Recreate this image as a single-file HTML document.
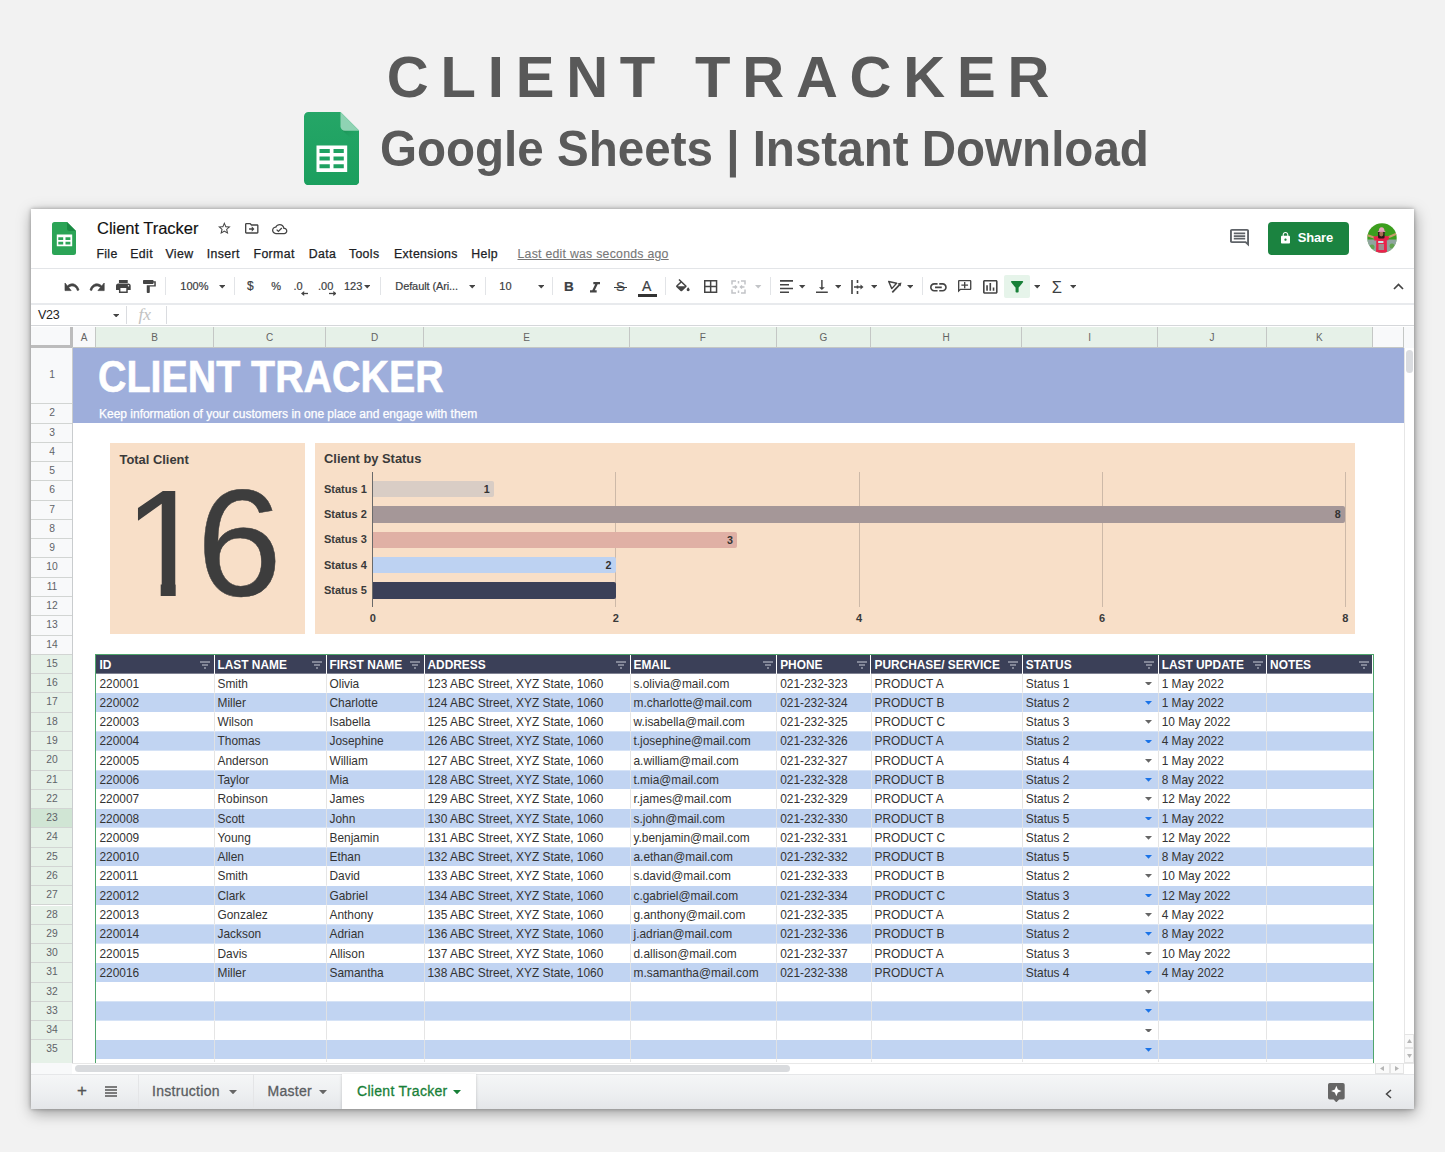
<!DOCTYPE html>
<html lang="en"><head><meta charset="utf-8"><title>Client Tracker</title>
<style>
*{box-sizing:border-box;margin:0;padding:0}
html,body{width:1445px;height:1152px;overflow:hidden}
body{background:#f2f2f2;font-family:"Liberation Sans",Arial,sans-serif;position:relative;color:#333}
.abs{position:absolute}
.t1{left:-1.5px;top:44px;width:1445px;text-align:center;font-weight:bold;font-size:58px;line-height:66px;letter-spacing:11.8px;color:#595959;padding-left:6px;white-space:nowrap}
.t2{left:379.5px;top:119.5px;font-weight:bold;font-size:50px;line-height:58px;color:#5a5a5a;white-space:nowrap;transform-origin:0 0;transform:scaleX(.951)}
.win{left:31px;top:209px;width:1383px;height:899.6px;background:#fff;box-shadow:1px 4px 14px rgba(0,0,0,.36),0 0 4px rgba(0,0,0,.3);overflow:hidden}
.win *{position:absolute}
.hl{left:0;width:1383px;height:1px;background:#e3e5e8}
.doct{left:66px;top:8px;font-size:16.5px;line-height:22px;color:#111;white-space:nowrap;letter-spacing:-.03px;-webkit-text-stroke:.15px #111}
.menu{top:36.8px;font-size:12.3px;line-height:16px;color:#202124;-webkit-text-stroke:.25px #202124;letter-spacing:.37px;white-space:nowrap}
.tb{font-size:11px;color:#3c4043;-webkit-text-stroke:.2px #3c4043;white-space:nowrap;line-height:14px}
.sep{top:67px;width:1px;height:18px;background:#e2e4e7}
.ch{top:117.5px;height:21.3px;background:#e6f1e8;border-right:1px solid #c4c7c5;font-size:10px;line-height:21px;text-align:center;color:#636363}
.rh{left:0;width:42px;background:#f8f9fa;border-bottom:1px solid #d2d5d3;font-size:10.3px;text-align:center;color:#5f6368}
.rh.g{background:#e6f1e8}
.rh.a{background:#d0e5d4}
.cell{font-size:11.9px;line-height:21.7px;color:#333;white-space:nowrap;overflow:hidden;padding-left:3px;height:19.28px}
.hc{font-weight:bold;font-size:11.9px;color:#fff;line-height:21px;white-space:nowrap;overflow:hidden;padding-left:3px;height:18.7px;background:#3b4058;border-right:1px solid #fff}
.row{left:65px;width:1277px;height:19.28px}
.vl{width:1px;background:#e2e2e2}
.tab{top:865px;height:34px;font-size:14px;line-height:34px;color:#5a5d61;white-space:nowrap;letter-spacing:.3px;-webkit-text-stroke:.3px}
</style></head><body>

<div class="abs t1">CLIENT TRACKER</div>
<svg class="abs" style="left:303.5px;top:111.600px" width="55.300" height="73.300" viewBox="0 0 55.300 73.300">
<defs><linearGradient id="gbody" x1="0" y1="0" x2="0" y2="1"><stop offset="0" stop-color="#25a667"/><stop offset="1" stop-color="#1b9f5e"/></linearGradient>
<linearGradient id="gfold" x1="0" y1="0" x2="1" y2="1"><stop offset="0" stop-color="#167a45" stop-opacity=".55"/><stop offset=".6" stop-color="#1b9f5e" stop-opacity="0"/></linearGradient></defs>
<path d="M4.500 0H36.500l18.800 18.800V68.800a4.500 4.500 0 0 1-4.500 4.500H4.500A4.500 4.500 0 0 1 0 68.800V4.500A4.500 4.500 0 0 1 4.500 0z" fill="url(#gbody)"/>
<path d="M37.500 17.500l17.800 1.300v16z" fill="url(#gfold)"/>
<path d="M36.500 0l18.800 18.800H41a4.500 4.500 0 0 1-4.500-4.500z" fill="#8fd3b3"/>
<path d="M12.500 33.500h30.700V60H12.500zM15.500 36.900v4.100h10.300v-4.100zM29.500 36.900v4.100h10.300v-4.100zM15.500 44.400v4h10.300v-4zM29.500 44.400v4h10.300v-4zM15.500 52.200v4.100h10.300v-4.100zM29.500 52.200v4.100h10.300v-4.100z" fill="#fff" fill-rule="evenodd"/>
</svg>
<div class="abs t2">Google Sheets | Instant Download</div>
<div class="abs win">
<svg style="left:21px;top:13px" width="24" height="33" viewBox="0 0 24 33">
<path d="M2.5 0H15l9 9v21.5a2.5 2.5 0 0 1-2.500 2.5h-19A2.500 2.500 0 0 1 0 30.500v-28A2.500 2.500 0 0 1 2.500 0z" fill="#2ba456"/>
<path d="M15 0l9 9h-6.500A2.500 2.500 0 0 1 15 6.500z" fill="#1a8a43"/>
<path d="M4.800 12.600h15.400v11.700H4.800zM6.300 15.300v2.700h4.900v-2.700zM13.500 15.300v2.700h4.900v-2.700zM6.300 19.800v2.700h4.900v-2.700zM13.500 19.800v2.700h4.900v-2.700z" fill="#fff" fill-rule="evenodd"/>
</svg>
<div class="doct">Client Tracker</div>
<svg style="left:187.30px;top:13.40px" width="12.70" height="12.00" viewBox="2.00 2.00 20.00 19.00" preserveAspectRatio="none" overflow="visible"><path d="M22 9.240l-7.190-.620L12 2 9.190 8.630 2 9.240l5.460 4.730L5.820 21 12 17.270 18.180 21l-1.630-7.030L22 9.240zM12 15.400l-3.760 2.270 1-4.280-3.320-2.880 4.380-.380L12 6.100l1.710 4.040 4.380.380-3.320 2.880 1 4.280L12 15.400z" fill="#444" stroke="#444" stroke-width="0"/></svg>
<svg style="left:214.00px;top:14.00px" width="13.50" height="10.70" viewBox="2.00 4.00 20.00 16.00" preserveAspectRatio="none" overflow="visible"><path d="M20 6h-8l-2-2H4c-1.100 0-2 .900-2 2v12c0 1.100.900 2 2 2h16c1.100 0 2-.900 2-2V8c0-1.100-.900-2-2-2zm0 12H4V6h5.170l2 2H20v10zm-8-1l4-4-4-4v3H8v2h4z" fill="#444" stroke="#444" stroke-width="0"/></svg>
<svg style="left:241.30px;top:15.00px" width="15.40" height="10.20" viewBox="0.00 4.00 24.00 16.00" preserveAspectRatio="none" overflow="visible"><path d="M19.350 10.040C18.670 6.590 15.640 4 12 4 9.110 4 6.600 5.640 5.350 8.040 2.340 8.360 0 10.910 0 14c0 3.310 2.690 6 6 6h13c2.760 0 5-2.240 5-5 0-2.640-2.050-4.780-4.650-4.960zM19 18H6c-2.210 0-4-1.790-4-4 0-2.050 1.530-3.760 3.560-3.970l1.070-.110.500-.950C8.080 7.140 9.940 6 12 6c2.620 0 4.880 1.860 5.390 4.430l.300 1.500 1.530.110c1.560.100 2.780 1.410 2.780 2.960 0 1.650-1.350 3-3 3zm-9-3.820l-2.090-2.090L6.500 13.500 10 17l6.010-6.010-1.410-1.410z" fill="#444" stroke="#444" stroke-width="0"/></svg>
<div class="menu" style="left:65.4px">File</div>
<div class="menu" style="left:99.3px">Edit</div>
<div class="menu" style="left:134.5px">View</div>
<div class="menu" style="left:175.7px">Insert</div>
<div class="menu" style="left:222.5px">Format</div>
<div class="menu" style="left:277.7px">Data</div>
<div class="menu" style="left:317.9px">Tools</div>
<div class="menu" style="left:363.0px">Extensions</div>
<div class="menu" style="left:440.2px">Help</div>
<div class="menu" style="left:486.5px;color:#777;-webkit-text-stroke:.1px #777;text-decoration:underline;letter-spacing:.25px">Last edit was seconds ago</div>
<svg style="left:1199.00px;top:20.00px" width="19.00" height="17.50" viewBox="2.00 2.00 20.00 20.00" preserveAspectRatio="none" overflow="visible"><path d="M21.990 4c0-1.100-.890-2-1.990-2H4c-1.100 0-2 .900-2 2v12c0 1.100.900 2 2 2h14l4 4-.010-18zM20 4v13.170L18.830 16H4V4h16zM6 12h12v2H6zm0-3h12v2H6zm0-3h12v2H6z" fill="#5f6368" stroke="#5f6368" stroke-width="0"/></svg>
<div style="left:1236.5px;top:13px;width:81px;height:32.500px;background:#1b8340;border-radius:4px"></div>
<svg style="left:1249.50px;top:23.00px" width="9.00" height="11.50" viewBox="4.00 1.00 16.00 21.00" preserveAspectRatio="none" overflow="visible"><path d="M18 8h-1V6c0-2.760-2.240-5-5-5S7 3.240 7 6v2H6c-1.100 0-2 .900-2 2v10c0 1.100.900 2 2 2h12c1.100 0 2-.900 2-2V10c0-1.100-.900-2-2-2zm-6 9c-1.100 0-2-.900-2-2s.900-2 2-2 2 .900 2 2-.900 2-2 2zm3.100-9H8.900V6c0-1.710 1.390-3.100 3.100-3.100 1.710 0 3.100 1.390 3.100 3.100v2z" fill="#fff" stroke="#fff" stroke-width="0"/></svg>
<div style="left:1266.8px;top:20px;font-size:13px;line-height:18px;font-weight:bold;color:#fff;letter-spacing:-.2px">Share</div>
<svg style="left:1335.8px;top:14.3px" width="30" height="30" viewBox="0 0 30 30"><defs><clipPath id="av"><circle cx="15" cy="15" r="14.700"/></clipPath></defs><g clip-path="url(#av)"><rect width="30" height="30" fill="#3c9e1e"/><rect y="16.500" width="30" height="14" fill="#b3a8d6" opacity=".7"/><circle cx="5" cy="24" r="2.500" fill="#4ea32e" opacity=".7"/><circle cx="25" cy="23" r="2.500" fill="#4ea32e" opacity=".7"/><path d="M7 14.500L.500 12.300" stroke="#c99a6b" stroke-width="2.200" stroke-linecap="round"/><path d="M22 14L29.500 10.800" stroke="#c99a6b" stroke-width="2.200" stroke-linecap="round"/><path d="M6.300 13.600L11.500 13h7l4 .600-1.500 4-1.200-.500.200 13H9l.300-13-1.500.800z" fill="#e9234b"/><rect x="11" y="8" width="6.600" height="7.600" rx="1.500" fill="#2a1a18"/><ellipse cx="14.300" cy="10.800" rx="2.100" ry="2.600" fill="#a8704f"/><path d="M11.900 8.200c0-3 .800-4 2.700-4s2.800 1 2.800 4z" fill="#e8a6bd"/><ellipse cx="14.600" cy="8.300" rx="3.900" ry=".900" fill="#d98fab"/><rect x="11" y="18" width="5.600" height="2" rx=".800" fill="#c6e8ea"/><rect x="11.500" y="21" width="5.500" height="6" fill="#8fa6a0" opacity=".8"/></g></svg>
<div class="hl" style="top:59px"></div>
<svg style="left:33.50px;top:74.10px" width="14.00" height="7.60" viewBox="2.00 7.00 20.47 9.00" preserveAspectRatio="none" overflow="visible"><path d="M12.5 8c-2.650 0-5.050.990-6.900 2.600L2 7v9h9l-3.620-3.620c1.390-1.160 3.160-1.880 5.120-1.880 3.540 0 6.550 2.310 7.600 5.500l2.370-.780C21.080 11.030 17.150 8 12.500 8z" fill="#444" stroke="#444" stroke-width="0.9"/></svg>
<svg style="left:59.10px;top:74.10px" width="14.20" height="7.60" viewBox="1.54 7.00 20.46 9.00" preserveAspectRatio="none" overflow="visible"><path d="M18.400 10.600C16.550 8.990 14.150 8 11.500 8c-4.650 0-8.580 3.030-9.960 7.220L3.900 16c1.050-3.190 4.050-5.500 7.600-5.500 1.950 0 3.730.720 5.120 1.880L13 16h9V7l-3.600 3.600z" fill="#444" stroke="#444" stroke-width="0.9"/></svg>
<svg style="left:84.70px;top:71.30px" width="14.70" height="13.00" viewBox="2.00 3.00 20.00 18.00" preserveAspectRatio="none" overflow="visible"><path d="M19 8H5c-1.660 0-3 1.340-3 3v6h4v4h12v-4h4v-6c0-1.660-1.340-3-3-3zm-3 11H8v-5h8v5zm3-7c-.550 0-1-.450-1-1s.450-1 1-1 1 .450 1 1-.450 1-1 1zm-1-9H6v4h12V3z" fill="#444" stroke="#444" stroke-width="0"/></svg>
<svg style="left:111.60px;top:71.30px" width="12.80" height="13.00" viewBox="4.00 2.00 17.00 20.00" preserveAspectRatio="none" overflow="visible"><path d="M18 4V3c0-.550-.450-1-1-1H5c-.550 0-1 .450-1 1v4c0 .550.450 1 1 1h12c.550 0 1-.450 1-1V6h1v4H9v11c0 .550.450 1 1 1h2c.550 0 1-.450 1-1v-9h8V4h-3z" fill="#444" stroke="#444" stroke-width="0"/></svg>
<div class="sep" style="left:134.2px;top:68px"></div>
<div class="sep" style="left:202.6px;top:68px"></div>
<div class="sep" style="left:348.8px;top:68px"></div>
<div class="sep" style="left:453.5px;top:68px"></div>
<div class="sep" style="left:520.9px;top:68px"></div>
<div class="sep" style="left:634.3px;top:68px"></div>
<div class="sep" style="left:739.2px;top:68px"></div>
<div class="sep" style="left:890.9px;top:68px"></div>
<div class="tb" style="left:149.3px;top:69.8px;">100%</div>
<svg style="left:187.7px;top:76.2px" width="6.4" height="3.39" viewBox="0 0 10 5" preserveAspectRatio="none"><path d="M0 0h10L5 5z" fill="#444"/></svg>
<div class="tb" style="left:216.0px;top:69.8px;font-size:12px">$</div>
<div class="tb" style="left:240.3px;top:69.8px;font-size:11px">%</div>
<div class="tb" style="left:262.5px;top:69.8px;">.0</div>
<div class="tb" style="left:287.0px;top:69.8px;">.00</div>
<svg style="left:269.8px;top:82.3px" width="7.500" height="5" viewBox="0 0 7.500 5"><path d="M7.500 2.500H1.500" fill="none" stroke="#444" stroke-width="1.300"/><path d="M3.200 0L0 2.500 3.200 5z" fill="#444"/></svg>
<svg style="left:297.5px;top:82.3px" width="7.500" height="5" viewBox="0 0 7.500 5"><path d="M0 2.500h6" fill="none" stroke="#444" stroke-width="1.300"/><path d="M4.300 0l3.200 2.500L4.300 5z" fill="#444"/></svg>
<div class="tb" style="left:313.0px;top:69.8px;">123</div>
<svg style="left:333.0px;top:76.2px" width="6.4" height="3.39" viewBox="0 0 10 5" preserveAspectRatio="none"><path d="M0 0h10L5 5z" fill="#444"/></svg>
<div class="tb" style="left:364.3px;top:69.8px;letter-spacing:-.1px">Default (Ari...</div>
<svg style="left:437.5px;top:76.2px" width="6.4" height="3.39" viewBox="0 0 10 5" preserveAspectRatio="none"><path d="M0 0h10L5 5z" fill="#444"/></svg>
<div class="tb" style="left:468.3px;top:69.8px;">10</div>
<svg style="left:506.5px;top:76.2px" width="6.4" height="3.39" viewBox="0 0 10 5" preserveAspectRatio="none"><path d="M0 0h10L5 5z" fill="#444"/></svg>
<div class="tb" style="left:533px;top:70px;font-weight:bold;font-size:13.5px;line-height:16px">B</div>
<svg style="left:558.80px;top:72.60px" width="10.00" height="10.50" viewBox="6.00 4.00 12.00 14.00" preserveAspectRatio="none" overflow="visible"><path d="M10 4v3h2.210l-3.420 8H6v3h8v-3h-2.210l3.420-8H18V4z" fill="#444" stroke="#444" stroke-width="0"/></svg>
<div class="tb" style="left:585px;top:70px;font-size:13.500px;line-height:16px">S</div>
<div style="left:583.2px;top:77.5px;width:12.700px;height:1.300px;background:#3c4043"></div>
<div class="tb" style="left:611px;top:68.5px;font-size:14px;line-height:16px">A</div>
<div style="left:607px;top:85.2px;width:18.800px;height:3px;background:#333"></div>
<svg style="left:644.80px;top:69.90px" width="13.70" height="12.30" viewBox="3.00 0.00 18.00 17.00" preserveAspectRatio="none" overflow="visible"><path d="M16.560 8.940L7.620 0 6.210 1.410l2.380 2.380-5.150 5.150c-.590.590-.590 1.540 0 2.120l5.500 5.500c.290.290.680.440 1.060.440s.770-.150 1.060-.440l5.500-5.500c.590-.580.590-1.530 0-2.120zM5.210 10L10 5.210 14.790 10H5.210zM19 11.500s-2 2.170-2 3.500c0 1.100.900 2 2 2s2-.900 2-2c0-1.330-2-3.500-2-3.500z" fill="#444" stroke="#444" stroke-width="0"/></svg>
<svg style="left:672.60px;top:70.90px" width="13.30" height="13.00" viewBox="3.00 3.00 18.00 18.00" preserveAspectRatio="none" overflow="visible"><path d="M3 3v18h18V3H3zm8 16H5v-6h6v6zm0-8H5V5h6v6zm8 8h-6v-6h6v6zm0-8h-6V5h6v6z" fill="#444" stroke="#444" stroke-width="0"/></svg>
<svg style="left:699.5px;top:71px" width="15" height="14" viewBox="0 0 15 14"><path d="M1 4.500V1h4M10 1h4v3.500M14 9.500V13h-4M5 13H1V9.500M7.500 1v2.500M7.500 10.500V13M1.500 7H5M13.500 7H10M4 5.500L5.500 7 4 8.500M11 5.500L9.500 7 11 8.500" fill="none" stroke="#c2c4c7" stroke-width="1.500"/></svg>
<svg style="left:724.3px;top:76.2px" width="6.4" height="3.39" viewBox="0 0 10 5" preserveAspectRatio="none"><path d="M0 0h10L5 5z" fill="#c2c4c7"/></svg>
<svg style="left:749.4px;top:71px" width="13" height="13.200" viewBox="0 0 13 13.200"><path d="M0 .900h13M0 4.700h9M0 8.500h13M0 12.300h9" stroke="#444" stroke-width="1.600"/></svg>
<svg style="left:768.2px;top:76.2px" width="6.4" height="3.39" viewBox="0 0 10 5" preserveAspectRatio="none"><path d="M0 0h10L5 5z" fill="#444"/></svg>
<svg style="left:785.20px;top:70.90px" width="11.80" height="13.00" viewBox="4.00 3.00 16.00 18.00" preserveAspectRatio="none" overflow="visible"><path d="M16 13h-3V3h-2v10H8l4 4 4-4zM4 19v2h16v-2H4z" fill="#444" stroke="#444" stroke-width="0"/></svg>
<svg style="left:804.0px;top:76.2px" width="6.4" height="3.39" viewBox="0 0 10 5" preserveAspectRatio="none"><path d="M0 0h10L5 5z" fill="#444"/></svg>
<svg style="left:820px;top:71px" width="13" height="14" viewBox="0 0 13 14"><path d="M1 0v14M6.500 0v3M6.500 5.500v3M6.500 11v3" stroke="#444" stroke-width="1.600"/><path d="M3 7h7" stroke="#444" stroke-width="1.500"/><path d="M9.500 4.500L12.500 7 9.500 9.500z" fill="#444"/></svg>
<svg style="left:840.0px;top:76.2px" width="6.4" height="3.39" viewBox="0 0 10 5" preserveAspectRatio="none"><path d="M0 0h10L5 5z" fill="#444"/></svg>
<svg style="left:856.5px;top:71px" width="15" height="14" viewBox="0 0 15 14"><path d="M.700 1.500l7.900 1.700L3.800 8.600z" fill="none" stroke="#444" stroke-width="1.400" stroke-linejoin="round"/><path d="M4.300 12.300l7.400-7.600" stroke="#444" stroke-width="1.700"/><path d="M13.500 2.600l-4 .900 3 3z" fill="#444"/></svg>
<svg style="left:875.7px;top:76.2px" width="6.4" height="3.39" viewBox="0 0 10 5" preserveAspectRatio="none"><path d="M0 0h10L5 5z" fill="#444"/></svg>
<svg style="left:899.40px;top:73.80px" width="16.80" height="8.60" viewBox="2.00 7.00 20.00 10.00" preserveAspectRatio="none" overflow="visible"><path d="M3.900 12c0-1.710 1.390-3.100 3.100-3.100h4V7H7c-2.760 0-5 2.240-5 5s2.240 5 5 5h4v-1.900H7c-1.710 0-3.100-1.390-3.100-3.100zM8 13h8v-2H8v2zm9-6h-4v1.900h4c1.710 0 3.100 1.390 3.100 3.100s-1.390 3.100-3.100 3.100h-4V17h4c2.760 0 5-2.240 5-5s-2.240-5-5-5z" fill="#444" stroke="#444" stroke-width="0"/></svg>
<svg style="left:926.80px;top:71.40px" width="13.40" height="12.50" viewBox="2.00 2.00 20.00 20.00" preserveAspectRatio="none" overflow="visible"><path d="M2.010 4c0-1.100.890-2 1.990-2h16c1.100 0 2 .900 2 2v12c0 1.100-.900 2-2 2H6l-4 4 .010-18zM4 4v13.170L5.170 16H20V4H4zm7 1h2v4h4v2h-4v4h-2v-4H7V9h4z" fill="#444" stroke="#444" stroke-width="0"/></svg>
<svg style="left:951.80px;top:70.80px" width="14.60" height="13.70" viewBox="3.00 3.00 18.00 18.00" preserveAspectRatio="none" overflow="visible"><path d="M19 3H5c-1.100 0-2 .900-2 2v14c0 1.100.900 2 2 2h14c1.100 0 2-.900 2-2V5c0-1.100-.900-2-2-2zm0 16H5V5h14v14zM7 10h2v7H7zm4-3h2v10h-2zm4 6h2v4h-2z" fill="#444" stroke="#444" stroke-width="0"/></svg>
<div style="left:973px;top:65.5px;width:25.500px;height:23.500px;background:#e6f4ea;border-radius:2px"></div>
<svg style="left:979.80px;top:72.30px" width="12.20" height="11.60" viewBox="4.04 4.00 15.91 16.00" preserveAspectRatio="none" overflow="visible"><path d="M4.250 5.610C6.270 8.200 10 13 10 13v6c0 .550.450 1 1 1h2c.550 0 1-.450 1-1v-6s3.720-4.800 5.740-7.390c.510-.660.040-1.610-.790-1.610H5.040c-.830 0-1.300.950-.790 1.610z" fill="#188038" stroke="#188038" stroke-width="0"/></svg>
<svg style="left:1003.0px;top:76.2px" width="6.4" height="3.39" viewBox="0 0 10 5" preserveAspectRatio="none"><path d="M0 0h10L5 5z" fill="#444"/></svg>
<div class="tb" style="left:1020.8px;top:69.8px;font-size:16.500px;line-height:16px;top:69.6px;-webkit-text-stroke:0">Σ</div>
<svg style="left:1038.6px;top:76.2px" width="6.4" height="3.39" viewBox="0 0 10 5" preserveAspectRatio="none"><path d="M0 0h10L5 5z" fill="#444"/></svg>
<svg style="left:1361.5px;top:74px" width="11" height="7" viewBox="0 0 11 7"><path d="M1 6l4.500-4.500L10 6" fill="none" stroke="#444" stroke-width="1.700"/></svg>
<div class="hl" style="top:94px;height:2px;background:#e8eaed"></div>
<div style="left:7px;top:98.5px;font-size:12.500px;line-height:15px;color:#222;letter-spacing:-.3px">V23</div>
<svg style="left:82.0px;top:104.9px" width="6.4" height="3.39" viewBox="0 0 10 5" preserveAspectRatio="none"><path d="M0 0h10L5 5z" fill="#444"/></svg>
<div style="left:95.3px;top:97px;width:1px;height:18px;background:#dadce0"></div>
<div style="left:107.5px;top:95.5px;font-size:17.5px;line-height:18px;font-style:italic;font-family:'Liberation Serif',serif;color:#c2c2c2">fx</div>
<div style="left:135.2px;top:97px;width:1px;height:18px;background:#dadce0"></div>
<div class="hl" style="top:116px;background:#d5d7da"></div>
<div style="left:0;top:117.5px;width:42px;height:21.300px;background:#f8f9fa;border-right:3.800px solid #bcbcbc;border-bottom:3.600px solid #bcbcbc"></div>
<div class="ch" style="left:42.0px;width:23.0px;background:#f8f9fa">A</div>
<div class="ch" style="left:65.0px;width:118.0px;background:#e6f1e8">B</div>
<div class="ch" style="left:183.0px;width:112.0px;background:#e6f1e8">C</div>
<div class="ch" style="left:295.0px;width:98.0px;background:#e6f1e8">D</div>
<div class="ch" style="left:393.0px;width:206.0px;background:#e6f1e8">E</div>
<div class="ch" style="left:599.0px;width:146.7px;background:#e6f1e8">F</div>
<div class="ch" style="left:745.7px;width:94.3px;background:#e6f1e8">G</div>
<div class="ch" style="left:840.0px;width:151.3px;background:#e6f1e8">H</div>
<div class="ch" style="left:991.3px;width:135.9px;background:#e6f1e8">I</div>
<div class="ch" style="left:1127.2px;width:108.4px;background:#e6f1e8">J</div>
<div class="ch" style="left:1235.6px;width:106.4px;background:#e6f1e8">K</div>
<div class="ch" style="left:1342.0px;width:31.0px;background:#f8f9fa"></div>
<div style="left:1373px;top:117.5px;width:10px;height:21.300px;background:#f8f9fa"></div>
<div style="left:42px;top:138px;width:1330px;height:1px;background:#c4c7c5"></div>
<div class="rh" style="top:138.80px;height:56.20px;line-height:54.90px">1</div>
<div class="rh" style="top:195.00px;height:19.50px;line-height:18.20px">2</div>
<div class="rh" style="top:214.50px;height:19.28px;line-height:17.98px">3</div>
<div class="rh" style="top:233.78px;height:19.28px;line-height:17.98px">4</div>
<div class="rh" style="top:253.06px;height:19.28px;line-height:17.98px">5</div>
<div class="rh" style="top:272.34px;height:19.28px;line-height:17.98px">6</div>
<div class="rh" style="top:291.62px;height:19.28px;line-height:17.98px">7</div>
<div class="rh" style="top:310.90px;height:19.28px;line-height:17.98px">8</div>
<div class="rh" style="top:330.18px;height:19.28px;line-height:17.98px">9</div>
<div class="rh" style="top:349.46px;height:19.28px;line-height:17.98px">10</div>
<div class="rh" style="top:368.74px;height:19.28px;line-height:17.98px">11</div>
<div class="rh" style="top:388.02px;height:19.28px;line-height:17.98px">12</div>
<div class="rh" style="top:407.30px;height:19.28px;line-height:17.98px">13</div>
<div class="rh" style="top:426.58px;height:19.28px;line-height:17.98px">14</div>
<div class="rh g" style="top:445.86px;height:19.28px;line-height:17.98px">15</div>
<div class="rh g" style="top:465.14px;height:19.28px;line-height:17.98px">16</div>
<div class="rh g" style="top:484.42px;height:19.28px;line-height:17.98px">17</div>
<div class="rh g" style="top:503.70px;height:19.28px;line-height:17.98px">18</div>
<div class="rh g" style="top:522.98px;height:19.28px;line-height:17.98px">19</div>
<div class="rh g" style="top:542.26px;height:19.28px;line-height:17.98px">20</div>
<div class="rh g" style="top:561.54px;height:19.28px;line-height:17.98px">21</div>
<div class="rh g" style="top:580.82px;height:19.28px;line-height:17.98px">22</div>
<div class="rh g a" style="top:600.10px;height:19.28px;line-height:17.98px">23</div>
<div class="rh g" style="top:619.38px;height:19.28px;line-height:17.98px">24</div>
<div class="rh g" style="top:638.66px;height:19.28px;line-height:17.98px">25</div>
<div class="rh g" style="top:657.94px;height:19.28px;line-height:17.98px">26</div>
<div class="rh g" style="top:677.22px;height:19.28px;line-height:17.98px">27</div>
<div class="rh g" style="top:696.50px;height:19.28px;line-height:17.98px">28</div>
<div class="rh g" style="top:715.78px;height:19.28px;line-height:17.98px">29</div>
<div class="rh g" style="top:735.06px;height:19.28px;line-height:17.98px">30</div>
<div class="rh g" style="top:754.34px;height:19.28px;line-height:17.98px">31</div>
<div class="rh g" style="top:773.62px;height:19.28px;line-height:17.98px">32</div>
<div class="rh g" style="top:792.90px;height:19.28px;line-height:17.98px">33</div>
<div class="rh g" style="top:812.18px;height:19.28px;line-height:17.98px">34</div>
<div class="rh g" style="top:831.46px;height:19.28px;line-height:17.98px">35</div>
<div class="rh g" style="top:850.24px;height:4px;border:0"></div>
<div style="left:41px;top:138px;width:1px;height:716px;background:#c9ccce"></div>
<div style="left:42px;top:138.8px;width:1331px;height:75.400px;background:#9eaedb"></div>
<div style="left:67px;top:141.5px;font-size:45px;line-height:52px;font-weight:bold;color:#fff;white-space:nowrap;transform-origin:0 0;transform:scaleX(.875);-webkit-text-stroke:.6px #fff">CLIENT TRACKER</div>
<div style="left:68px;top:197.5px;font-size:12px;line-height:15px;color:#fff;white-space:nowrap;letter-spacing:-.01px;-webkit-text-stroke:.25px #fff">Keep information of your customers in one place and engage with them</div>
<div style="left:79px;top:234px;width:195px;height:190.500px;background:#f8dfc8"></div>
<div style="left:284px;top:234px;width:1040px;height:190.500px;background:#f8dfc8"></div>
<div style="left:88.5px;top:243px;font-size:12.900px;line-height:15px;font-weight:bold;color:#3a3a3a">Total Client</div>
<div style="left:92.2px;top:253.8px;font-size:153px;line-height:160px;color:#3d3d3d;clip-path:polygon(0 0,100% 0,100% 121.300px,52.500px 121.300px,52.500px 100%,37.500px 100%,37.500px 121.300px,0 121.300px)">1</div>
<div style="left:165.8px;top:254.3px;font-size:153px;line-height:160px;color:#3d3d3d;-webkit-text-stroke:.5px #3d3d3d">6</div>
<div style="left:293px;top:242.4px;font-size:12.900px;line-height:15px;font-weight:bold;color:#3a3a3a">Client by Status</div>
<div style="left:341.3px;top:262.5px;width:1px;height:135.500px;background:#6a6a6a"></div>
<div style="left:331.8px;top:403px;width:20px;text-align:center;font-size:11px;line-height:13px;font-weight:bold;color:#3a3a3a">0</div>
<div style="left:584.4px;top:262.5px;width:1px;height:135.500px;background:#cdb9a8"></div>
<div style="left:574.9px;top:403px;width:20px;text-align:center;font-size:11px;line-height:13px;font-weight:bold;color:#3a3a3a">2</div>
<div style="left:827.5px;top:262.5px;width:1px;height:135.500px;background:#cdb9a8"></div>
<div style="left:818.0px;top:403px;width:20px;text-align:center;font-size:11px;line-height:13px;font-weight:bold;color:#3a3a3a">4</div>
<div style="left:1070.6px;top:262.5px;width:1px;height:135.500px;background:#cdb9a8"></div>
<div style="left:1061.1px;top:403px;width:20px;text-align:center;font-size:11px;line-height:13px;font-weight:bold;color:#3a3a3a">6</div>
<div style="left:1313.7px;top:262.5px;width:1px;height:135.500px;background:#cdb9a8"></div>
<div style="left:1304.2px;top:403px;width:20px;text-align:center;font-size:11px;line-height:13px;font-weight:bold;color:#3a3a3a">8</div>
<div style="left:293px;top:272.6px;font-size:11px;line-height:14px;font-weight:bold;color:#3a3a3a">Status 1</div>
<div style="left:341.8px;top:271.8px;width:121.5px;height:16.400px;background:#d9cdc5;border-radius:0 2px 2px 0;text-align:right;padding-right:4.500px;font-size:10.700px;line-height:16.400px;font-weight:bold;color:#333;position:absolute">1</div>
<div style="left:293px;top:298.0px;font-size:11px;line-height:14px;font-weight:bold;color:#3a3a3a">Status 2</div>
<div style="left:341.8px;top:297.2px;width:972.4px;height:16.400px;background:#a59798;border-radius:0 2px 2px 0;text-align:right;padding-right:4.500px;font-size:10.700px;line-height:16.400px;font-weight:bold;color:#333;position:absolute">8</div>
<div style="left:293px;top:323.4px;font-size:11px;line-height:14px;font-weight:bold;color:#3a3a3a">Status 3</div>
<div style="left:341.8px;top:322.6px;width:364.6px;height:16.400px;background:#e0b0a5;border-radius:0 2px 2px 0;text-align:right;padding-right:4.500px;font-size:10.700px;line-height:16.400px;font-weight:bold;color:#333;position:absolute">3</div>
<div style="left:293px;top:348.8px;font-size:11px;line-height:14px;font-weight:bold;color:#3a3a3a">Status 4</div>
<div style="left:341.8px;top:348.0px;width:243.1px;height:16.400px;background:#bdd2f2;border-radius:0 2px 2px 0;text-align:right;padding-right:4.500px;font-size:10.700px;line-height:16.400px;font-weight:bold;color:#333;position:absolute">2</div>
<div style="left:293px;top:374.2px;font-size:11px;line-height:14px;font-weight:bold;color:#3a3a3a">Status 5</div>
<div style="left:341.8px;top:373.4px;width:243.1px;height:16.400px;background:#3b4058;border-radius:0 2px 2px 0;text-align:right;padding-right:4.500px;font-size:10.700px;line-height:16.400px;font-weight:bold;color:#3b4058;position:absolute">2</div>
<div style="left:64px;top:445.66px;width:1279px;height:19px;background:#3b4058"></div>
<div class="hc" style="left:65.5px;top:445.96px;width:118.0px">ID</div>
<svg style="left:169.0px;top:451.56px" width="10" height="8" viewBox="0 0 10 8"><path d="M0 1h10M2 4h6M4 7h2" stroke="#c9ccd6" stroke-width="1.200"/></svg>
<div class="hc" style="left:183.5px;top:445.96px;width:112.0px">LAST NAME</div>
<svg style="left:281.0px;top:451.56px" width="10" height="8" viewBox="0 0 10 8"><path d="M0 1h10M2 4h6M4 7h2" stroke="#c9ccd6" stroke-width="1.200"/></svg>
<div class="hc" style="left:295.5px;top:445.96px;width:98.0px">FIRST NAME</div>
<svg style="left:379.0px;top:451.56px" width="10" height="8" viewBox="0 0 10 8"><path d="M0 1h10M2 4h6M4 7h2" stroke="#c9ccd6" stroke-width="1.200"/></svg>
<div class="hc" style="left:393.5px;top:445.96px;width:206.0px">ADDRESS</div>
<svg style="left:585.0px;top:451.56px" width="10" height="8" viewBox="0 0 10 8"><path d="M0 1h10M2 4h6M4 7h2" stroke="#c9ccd6" stroke-width="1.200"/></svg>
<div class="hc" style="left:599.5px;top:445.96px;width:146.7px">EMAIL</div>
<svg style="left:731.7px;top:451.56px" width="10" height="8" viewBox="0 0 10 8"><path d="M0 1h10M2 4h6M4 7h2" stroke="#c9ccd6" stroke-width="1.200"/></svg>
<div class="hc" style="left:746.2px;top:445.96px;width:94.3px">PHONE</div>
<svg style="left:826.0px;top:451.56px" width="10" height="8" viewBox="0 0 10 8"><path d="M0 1h10M2 4h6M4 7h2" stroke="#c9ccd6" stroke-width="1.200"/></svg>
<div class="hc" style="left:840.5px;top:445.96px;width:151.3px">PURCHASE/ SERVICE</div>
<svg style="left:977.3px;top:451.56px" width="10" height="8" viewBox="0 0 10 8"><path d="M0 1h10M2 4h6M4 7h2" stroke="#c9ccd6" stroke-width="1.200"/></svg>
<div class="hc" style="left:991.8px;top:445.96px;width:135.9px">STATUS</div>
<svg style="left:1113.2px;top:451.56px" width="10" height="8" viewBox="0 0 10 8"><path d="M0 1h10M2 4h6M4 7h2" stroke="#c9ccd6" stroke-width="1.200"/></svg>
<div class="hc" style="left:1127.7px;top:445.96px;width:108.4px">LAST UPDATE</div>
<svg style="left:1221.6px;top:451.56px" width="10" height="8" viewBox="0 0 10 8"><path d="M0 1h10M2 4h6M4 7h2" stroke="#c9ccd6" stroke-width="1.200"/></svg>
<div class="hc" style="left:1236.1px;top:445.96px;width:106.4px">NOTES</div>
<svg style="left:1328.0px;top:451.56px" width="10" height="8" viewBox="0 0 10 8"><path d="M0 1h10M2 4h6M4 7h2" stroke="#c9ccd6" stroke-width="1.200"/></svg>
<div style="left:65px;top:464.64px;width:1277px;height:19.28px;background:#fff"></div>
<div class="cell" style="left:65.5px;top:464.64px;width:117.0px">220001</div>
<div class="cell" style="left:183.5px;top:464.64px;width:111.0px">Smith</div>
<div class="cell" style="left:295.5px;top:464.64px;width:97.0px">Olivia</div>
<div class="cell" style="left:393.5px;top:464.64px;width:205.0px">123 ABC Street, XYZ State, 1060</div>
<div class="cell" style="left:599.5px;top:464.64px;width:145.7px">s.olivia@mail.com</div>
<div class="cell" style="left:746.2px;top:464.64px;width:93.3px">021-232-323</div>
<div class="cell" style="left:840.5px;top:464.64px;width:150.3px">PRODUCT A</div>
<div class="cell" style="left:991.8px;top:464.64px;width:134.9px">Status 1</div>
<div class="cell" style="left:1127.7px;top:464.64px;width:107.4px">1 May 2022</div>
<svg style="left:1114.0px;top:472.6px" width="7" height="3.71" viewBox="0 0 10 5" preserveAspectRatio="none"><path d="M0 0h10L5 5z" fill="#666"/></svg>
<div style="left:65px;top:483.92px;width:1277px;height:19.28px;background:#c1d4f2"></div>
<div class="cell" style="left:65.5px;top:483.92px;width:117.0px">220002</div>
<div class="cell" style="left:183.5px;top:483.92px;width:111.0px">Miller</div>
<div class="cell" style="left:295.5px;top:483.92px;width:97.0px">Charlotte</div>
<div class="cell" style="left:393.5px;top:483.92px;width:205.0px">124 ABC Street, XYZ State, 1060</div>
<div class="cell" style="left:599.5px;top:483.92px;width:145.7px">m.charlotte@mail.com</div>
<div class="cell" style="left:746.2px;top:483.92px;width:93.3px">021-232-324</div>
<div class="cell" style="left:840.5px;top:483.92px;width:150.3px">PRODUCT B</div>
<div class="cell" style="left:991.8px;top:483.92px;width:134.9px">Status 2</div>
<div class="cell" style="left:1127.7px;top:483.92px;width:107.4px">1 May 2022</div>
<svg style="left:1114.0px;top:491.9px" width="7" height="3.71" viewBox="0 0 10 5" preserveAspectRatio="none"><path d="M0 0h10L5 5z" fill="#1a73e8"/></svg>
<div style="left:65px;top:503.20px;width:1277px;height:19.28px;background:#fff"></div>
<div class="cell" style="left:65.5px;top:503.20px;width:117.0px">220003</div>
<div class="cell" style="left:183.5px;top:503.20px;width:111.0px">Wilson</div>
<div class="cell" style="left:295.5px;top:503.20px;width:97.0px">Isabella</div>
<div class="cell" style="left:393.5px;top:503.20px;width:205.0px">125 ABC Street, XYZ State, 1060</div>
<div class="cell" style="left:599.5px;top:503.20px;width:145.7px">w.isabella@mail.com</div>
<div class="cell" style="left:746.2px;top:503.20px;width:93.3px">021-232-325</div>
<div class="cell" style="left:840.5px;top:503.20px;width:150.3px">PRODUCT C</div>
<div class="cell" style="left:991.8px;top:503.20px;width:134.9px">Status 3</div>
<div class="cell" style="left:1127.7px;top:503.20px;width:107.4px">10 May 2022</div>
<svg style="left:1114.0px;top:511.2px" width="7" height="3.71" viewBox="0 0 10 5" preserveAspectRatio="none"><path d="M0 0h10L5 5z" fill="#666"/></svg>
<div style="left:65px;top:522.48px;width:1277px;height:19.28px;background:#c1d4f2"></div>
<div class="cell" style="left:65.5px;top:522.48px;width:117.0px">220004</div>
<div class="cell" style="left:183.5px;top:522.48px;width:111.0px">Thomas</div>
<div class="cell" style="left:295.5px;top:522.48px;width:97.0px">Josephine</div>
<div class="cell" style="left:393.5px;top:522.48px;width:205.0px">126 ABC Street, XYZ State, 1060</div>
<div class="cell" style="left:599.5px;top:522.48px;width:145.7px">t.josephine@mail.com</div>
<div class="cell" style="left:746.2px;top:522.48px;width:93.3px">021-232-326</div>
<div class="cell" style="left:840.5px;top:522.48px;width:150.3px">PRODUCT A</div>
<div class="cell" style="left:991.8px;top:522.48px;width:134.9px">Status 2</div>
<div class="cell" style="left:1127.7px;top:522.48px;width:107.4px">4 May 2022</div>
<svg style="left:1114.0px;top:530.5px" width="7" height="3.71" viewBox="0 0 10 5" preserveAspectRatio="none"><path d="M0 0h10L5 5z" fill="#1a73e8"/></svg>
<div style="left:65px;top:541.76px;width:1277px;height:19.28px;background:#fff"></div>
<div class="cell" style="left:65.5px;top:541.76px;width:117.0px">220005</div>
<div class="cell" style="left:183.5px;top:541.76px;width:111.0px">Anderson</div>
<div class="cell" style="left:295.5px;top:541.76px;width:97.0px">William</div>
<div class="cell" style="left:393.5px;top:541.76px;width:205.0px">127 ABC Street, XYZ State, 1060</div>
<div class="cell" style="left:599.5px;top:541.76px;width:145.7px">a.william@mail.com</div>
<div class="cell" style="left:746.2px;top:541.76px;width:93.3px">021-232-327</div>
<div class="cell" style="left:840.5px;top:541.76px;width:150.3px">PRODUCT A</div>
<div class="cell" style="left:991.8px;top:541.76px;width:134.9px">Status 4</div>
<div class="cell" style="left:1127.7px;top:541.76px;width:107.4px">1 May 2022</div>
<svg style="left:1114.0px;top:549.8px" width="7" height="3.71" viewBox="0 0 10 5" preserveAspectRatio="none"><path d="M0 0h10L5 5z" fill="#666"/></svg>
<div style="left:65px;top:561.04px;width:1277px;height:19.28px;background:#c1d4f2"></div>
<div class="cell" style="left:65.5px;top:561.04px;width:117.0px">220006</div>
<div class="cell" style="left:183.5px;top:561.04px;width:111.0px">Taylor</div>
<div class="cell" style="left:295.5px;top:561.04px;width:97.0px">Mia</div>
<div class="cell" style="left:393.5px;top:561.04px;width:205.0px">128 ABC Street, XYZ State, 1060</div>
<div class="cell" style="left:599.5px;top:561.04px;width:145.7px">t.mia@mail.com</div>
<div class="cell" style="left:746.2px;top:561.04px;width:93.3px">021-232-328</div>
<div class="cell" style="left:840.5px;top:561.04px;width:150.3px">PRODUCT B</div>
<div class="cell" style="left:991.8px;top:561.04px;width:134.9px">Status 2</div>
<div class="cell" style="left:1127.7px;top:561.04px;width:107.4px">8 May 2022</div>
<svg style="left:1114.0px;top:569.0px" width="7" height="3.71" viewBox="0 0 10 5" preserveAspectRatio="none"><path d="M0 0h10L5 5z" fill="#1a73e8"/></svg>
<div style="left:65px;top:580.32px;width:1277px;height:19.28px;background:#fff"></div>
<div class="cell" style="left:65.5px;top:580.32px;width:117.0px">220007</div>
<div class="cell" style="left:183.5px;top:580.32px;width:111.0px">Robinson</div>
<div class="cell" style="left:295.5px;top:580.32px;width:97.0px">James</div>
<div class="cell" style="left:393.5px;top:580.32px;width:205.0px">129 ABC Street, XYZ State, 1060</div>
<div class="cell" style="left:599.5px;top:580.32px;width:145.7px">r.james@mail.com</div>
<div class="cell" style="left:746.2px;top:580.32px;width:93.3px">021-232-329</div>
<div class="cell" style="left:840.5px;top:580.32px;width:150.3px">PRODUCT A</div>
<div class="cell" style="left:991.8px;top:580.32px;width:134.9px">Status 2</div>
<div class="cell" style="left:1127.7px;top:580.32px;width:107.4px">12 May 2022</div>
<svg style="left:1114.0px;top:588.3px" width="7" height="3.71" viewBox="0 0 10 5" preserveAspectRatio="none"><path d="M0 0h10L5 5z" fill="#666"/></svg>
<div style="left:65px;top:599.60px;width:1277px;height:19.28px;background:#c1d4f2"></div>
<div class="cell" style="left:65.5px;top:599.60px;width:117.0px">220008</div>
<div class="cell" style="left:183.5px;top:599.60px;width:111.0px">Scott</div>
<div class="cell" style="left:295.5px;top:599.60px;width:97.0px">John</div>
<div class="cell" style="left:393.5px;top:599.60px;width:205.0px">130 ABC Street, XYZ State, 1060</div>
<div class="cell" style="left:599.5px;top:599.60px;width:145.7px">s.john@mail.com</div>
<div class="cell" style="left:746.2px;top:599.60px;width:93.3px">021-232-330</div>
<div class="cell" style="left:840.5px;top:599.60px;width:150.3px">PRODUCT B</div>
<div class="cell" style="left:991.8px;top:599.60px;width:134.9px">Status 5</div>
<div class="cell" style="left:1127.7px;top:599.60px;width:107.4px">1 May 2022</div>
<svg style="left:1114.0px;top:607.6px" width="7" height="3.71" viewBox="0 0 10 5" preserveAspectRatio="none"><path d="M0 0h10L5 5z" fill="#1a73e8"/></svg>
<div style="left:65px;top:618.88px;width:1277px;height:19.28px;background:#fff"></div>
<div class="cell" style="left:65.5px;top:618.88px;width:117.0px">220009</div>
<div class="cell" style="left:183.5px;top:618.88px;width:111.0px">Young</div>
<div class="cell" style="left:295.5px;top:618.88px;width:97.0px">Benjamin</div>
<div class="cell" style="left:393.5px;top:618.88px;width:205.0px">131 ABC Street, XYZ State, 1060</div>
<div class="cell" style="left:599.5px;top:618.88px;width:145.7px">y.benjamin@mail.com</div>
<div class="cell" style="left:746.2px;top:618.88px;width:93.3px">021-232-331</div>
<div class="cell" style="left:840.5px;top:618.88px;width:150.3px">PRODUCT C</div>
<div class="cell" style="left:991.8px;top:618.88px;width:134.9px">Status 2</div>
<div class="cell" style="left:1127.7px;top:618.88px;width:107.4px">12 May 2022</div>
<svg style="left:1114.0px;top:626.9px" width="7" height="3.71" viewBox="0 0 10 5" preserveAspectRatio="none"><path d="M0 0h10L5 5z" fill="#666"/></svg>
<div style="left:65px;top:638.16px;width:1277px;height:19.28px;background:#c1d4f2"></div>
<div class="cell" style="left:65.5px;top:638.16px;width:117.0px">220010</div>
<div class="cell" style="left:183.5px;top:638.16px;width:111.0px">Allen</div>
<div class="cell" style="left:295.5px;top:638.16px;width:97.0px">Ethan</div>
<div class="cell" style="left:393.5px;top:638.16px;width:205.0px">132 ABC Street, XYZ State, 1060</div>
<div class="cell" style="left:599.5px;top:638.16px;width:145.7px">a.ethan@mail.com</div>
<div class="cell" style="left:746.2px;top:638.16px;width:93.3px">021-232-332</div>
<div class="cell" style="left:840.5px;top:638.16px;width:150.3px">PRODUCT B</div>
<div class="cell" style="left:991.8px;top:638.16px;width:134.9px">Status 5</div>
<div class="cell" style="left:1127.7px;top:638.16px;width:107.4px">8 May 2022</div>
<svg style="left:1114.0px;top:646.2px" width="7" height="3.71" viewBox="0 0 10 5" preserveAspectRatio="none"><path d="M0 0h10L5 5z" fill="#1a73e8"/></svg>
<div style="left:65px;top:657.44px;width:1277px;height:19.28px;background:#fff"></div>
<div class="cell" style="left:65.5px;top:657.44px;width:117.0px">220011</div>
<div class="cell" style="left:183.5px;top:657.44px;width:111.0px">Smith</div>
<div class="cell" style="left:295.5px;top:657.44px;width:97.0px">David</div>
<div class="cell" style="left:393.5px;top:657.44px;width:205.0px">133 ABC Street, XYZ State, 1060</div>
<div class="cell" style="left:599.5px;top:657.44px;width:145.7px">s.david@mail.com</div>
<div class="cell" style="left:746.2px;top:657.44px;width:93.3px">021-232-333</div>
<div class="cell" style="left:840.5px;top:657.44px;width:150.3px">PRODUCT B</div>
<div class="cell" style="left:991.8px;top:657.44px;width:134.9px">Status 2</div>
<div class="cell" style="left:1127.7px;top:657.44px;width:107.4px">10 May 2022</div>
<svg style="left:1114.0px;top:665.4px" width="7" height="3.71" viewBox="0 0 10 5" preserveAspectRatio="none"><path d="M0 0h10L5 5z" fill="#666"/></svg>
<div style="left:65px;top:676.72px;width:1277px;height:19.28px;background:#c1d4f2"></div>
<div class="cell" style="left:65.5px;top:676.72px;width:117.0px">220012</div>
<div class="cell" style="left:183.5px;top:676.72px;width:111.0px">Clark</div>
<div class="cell" style="left:295.5px;top:676.72px;width:97.0px">Gabriel</div>
<div class="cell" style="left:393.5px;top:676.72px;width:205.0px">134 ABC Street, XYZ State, 1060</div>
<div class="cell" style="left:599.5px;top:676.72px;width:145.7px">c.gabriel@mail.com</div>
<div class="cell" style="left:746.2px;top:676.72px;width:93.3px">021-232-334</div>
<div class="cell" style="left:840.5px;top:676.72px;width:150.3px">PRODUCT C</div>
<div class="cell" style="left:991.8px;top:676.72px;width:134.9px">Status 3</div>
<div class="cell" style="left:1127.7px;top:676.72px;width:107.4px">12 May 2022</div>
<svg style="left:1114.0px;top:684.7px" width="7" height="3.71" viewBox="0 0 10 5" preserveAspectRatio="none"><path d="M0 0h10L5 5z" fill="#1a73e8"/></svg>
<div style="left:65px;top:696.00px;width:1277px;height:19.28px;background:#fff"></div>
<div class="cell" style="left:65.5px;top:696.00px;width:117.0px">220013</div>
<div class="cell" style="left:183.5px;top:696.00px;width:111.0px">Gonzalez</div>
<div class="cell" style="left:295.5px;top:696.00px;width:97.0px">Anthony</div>
<div class="cell" style="left:393.5px;top:696.00px;width:205.0px">135 ABC Street, XYZ State, 1060</div>
<div class="cell" style="left:599.5px;top:696.00px;width:145.7px">g.anthony@mail.com</div>
<div class="cell" style="left:746.2px;top:696.00px;width:93.3px">021-232-335</div>
<div class="cell" style="left:840.5px;top:696.00px;width:150.3px">PRODUCT A</div>
<div class="cell" style="left:991.8px;top:696.00px;width:134.9px">Status 2</div>
<div class="cell" style="left:1127.7px;top:696.00px;width:107.4px">4 May 2022</div>
<svg style="left:1114.0px;top:704.0px" width="7" height="3.71" viewBox="0 0 10 5" preserveAspectRatio="none"><path d="M0 0h10L5 5z" fill="#666"/></svg>
<div style="left:65px;top:715.28px;width:1277px;height:19.28px;background:#c1d4f2"></div>
<div class="cell" style="left:65.5px;top:715.28px;width:117.0px">220014</div>
<div class="cell" style="left:183.5px;top:715.28px;width:111.0px">Jackson</div>
<div class="cell" style="left:295.5px;top:715.28px;width:97.0px">Adrian</div>
<div class="cell" style="left:393.5px;top:715.28px;width:205.0px">136 ABC Street, XYZ State, 1060</div>
<div class="cell" style="left:599.5px;top:715.28px;width:145.7px">j.adrian@mail.com</div>
<div class="cell" style="left:746.2px;top:715.28px;width:93.3px">021-232-336</div>
<div class="cell" style="left:840.5px;top:715.28px;width:150.3px">PRODUCT B</div>
<div class="cell" style="left:991.8px;top:715.28px;width:134.9px">Status 2</div>
<div class="cell" style="left:1127.7px;top:715.28px;width:107.4px">8 May 2022</div>
<svg style="left:1114.0px;top:723.3px" width="7" height="3.71" viewBox="0 0 10 5" preserveAspectRatio="none"><path d="M0 0h10L5 5z" fill="#1a73e8"/></svg>
<div style="left:65px;top:734.56px;width:1277px;height:19.28px;background:#fff"></div>
<div class="cell" style="left:65.5px;top:734.56px;width:117.0px">220015</div>
<div class="cell" style="left:183.5px;top:734.56px;width:111.0px">Davis</div>
<div class="cell" style="left:295.5px;top:734.56px;width:97.0px">Allison</div>
<div class="cell" style="left:393.5px;top:734.56px;width:205.0px">137 ABC Street, XYZ State, 1060</div>
<div class="cell" style="left:599.5px;top:734.56px;width:145.7px">d.allison@mail.com</div>
<div class="cell" style="left:746.2px;top:734.56px;width:93.3px">021-232-337</div>
<div class="cell" style="left:840.5px;top:734.56px;width:150.3px">PRODUCT A</div>
<div class="cell" style="left:991.8px;top:734.56px;width:134.9px">Status 3</div>
<div class="cell" style="left:1127.7px;top:734.56px;width:107.4px">10 May 2022</div>
<svg style="left:1114.0px;top:742.6px" width="7" height="3.71" viewBox="0 0 10 5" preserveAspectRatio="none"><path d="M0 0h10L5 5z" fill="#666"/></svg>
<div style="left:65px;top:753.84px;width:1277px;height:19.28px;background:#c1d4f2"></div>
<div class="cell" style="left:65.5px;top:753.84px;width:117.0px">220016</div>
<div class="cell" style="left:183.5px;top:753.84px;width:111.0px">Miller</div>
<div class="cell" style="left:295.5px;top:753.84px;width:97.0px">Samantha</div>
<div class="cell" style="left:393.5px;top:753.84px;width:205.0px">138 ABC Street, XYZ State, 1060</div>
<div class="cell" style="left:599.5px;top:753.84px;width:145.7px">m.samantha@mail.com</div>
<div class="cell" style="left:746.2px;top:753.84px;width:93.3px">021-232-338</div>
<div class="cell" style="left:840.5px;top:753.84px;width:150.3px">PRODUCT A</div>
<div class="cell" style="left:991.8px;top:753.84px;width:134.9px">Status 4</div>
<div class="cell" style="left:1127.7px;top:753.84px;width:107.4px">4 May 2022</div>
<svg style="left:1114.0px;top:761.8px" width="7" height="3.71" viewBox="0 0 10 5" preserveAspectRatio="none"><path d="M0 0h10L5 5z" fill="#1a73e8"/></svg>
<div style="left:65px;top:773.12px;width:1277px;height:19.28px;background:#fff"></div>
<svg style="left:1114.0px;top:781.1px" width="7" height="3.71" viewBox="0 0 10 5" preserveAspectRatio="none"><path d="M0 0h10L5 5z" fill="#666"/></svg>
<div style="left:65px;top:792.40px;width:1277px;height:19.28px;background:#c1d4f2"></div>
<svg style="left:1114.0px;top:800.4px" width="7" height="3.71" viewBox="0 0 10 5" preserveAspectRatio="none"><path d="M0 0h10L5 5z" fill="#1a73e8"/></svg>
<div style="left:65px;top:811.68px;width:1277px;height:19.28px;background:#fff"></div>
<svg style="left:1114.0px;top:819.7px" width="7" height="3.71" viewBox="0 0 10 5" preserveAspectRatio="none"><path d="M0 0h10L5 5z" fill="#666"/></svg>
<div style="left:65px;top:830.96px;width:1277px;height:19.28px;background:#c1d4f2"></div>
<svg style="left:1114.0px;top:839.0px" width="7" height="3.71" viewBox="0 0 10 5" preserveAspectRatio="none"><path d="M0 0h10L5 5z" fill="#1a73e8"/></svg>
<div class="vl" style="left:182.5px;top:464.64px;height:388.6px;opacity:.9"></div>
<div class="vl" style="left:294.5px;top:464.64px;height:388.6px;opacity:.9"></div>
<div class="vl" style="left:392.5px;top:464.64px;height:388.6px;opacity:.9"></div>
<div class="vl" style="left:598.5px;top:464.64px;height:388.6px;opacity:.9"></div>
<div class="vl" style="left:745.2px;top:464.64px;height:388.6px;opacity:.9"></div>
<div class="vl" style="left:839.5px;top:464.64px;height:388.6px;opacity:.9"></div>
<div class="vl" style="left:990.8px;top:464.64px;height:388.6px;opacity:.9"></div>
<div class="vl" style="left:1126.7px;top:464.64px;height:388.6px;opacity:.9"></div>
<div class="vl" style="left:1235.1px;top:464.64px;height:388.6px;opacity:.9"></div>
<div style="left:65px;top:464.14px;width:1277px;height:1px;background:rgba(255,255,255,.35)"></div>
<div style="left:65px;top:483.42px;width:1277px;height:1px;background:rgba(255,255,255,.35)"></div>
<div style="left:65px;top:502.70px;width:1277px;height:1px;background:rgba(255,255,255,.35)"></div>
<div style="left:65px;top:521.98px;width:1277px;height:1px;background:rgba(255,255,255,.35)"></div>
<div style="left:65px;top:541.26px;width:1277px;height:1px;background:rgba(255,255,255,.35)"></div>
<div style="left:65px;top:560.54px;width:1277px;height:1px;background:rgba(255,255,255,.35)"></div>
<div style="left:65px;top:579.82px;width:1277px;height:1px;background:rgba(255,255,255,.35)"></div>
<div style="left:65px;top:599.10px;width:1277px;height:1px;background:rgba(255,255,255,.35)"></div>
<div style="left:65px;top:618.38px;width:1277px;height:1px;background:rgba(255,255,255,.35)"></div>
<div style="left:65px;top:637.66px;width:1277px;height:1px;background:rgba(255,255,255,.35)"></div>
<div style="left:65px;top:656.94px;width:1277px;height:1px;background:rgba(255,255,255,.35)"></div>
<div style="left:65px;top:676.22px;width:1277px;height:1px;background:rgba(255,255,255,.35)"></div>
<div style="left:65px;top:695.50px;width:1277px;height:1px;background:rgba(255,255,255,.35)"></div>
<div style="left:65px;top:714.78px;width:1277px;height:1px;background:rgba(255,255,255,.35)"></div>
<div style="left:65px;top:734.06px;width:1277px;height:1px;background:rgba(255,255,255,.35)"></div>
<div style="left:65px;top:753.34px;width:1277px;height:1px;background:rgba(255,255,255,.35)"></div>
<div style="left:65px;top:772.62px;width:1277px;height:1px;background:rgba(255,255,255,.35)"></div>
<div style="left:65px;top:791.90px;width:1277px;height:1px;background:rgba(255,255,255,.35)"></div>
<div style="left:65px;top:811.18px;width:1277px;height:1px;background:rgba(255,255,255,.35)"></div>
<div style="left:65px;top:830.46px;width:1277px;height:1px;background:rgba(255,255,255,.35)"></div>
<div style="left:65px;top:849.74px;width:1277px;height:1px;background:rgba(255,255,255,.35)"></div>
<div style="left:64.2px;top:444.96px;width:1278.800px;height:1.100px;background:#4fa56c"></div>
<div style="left:64.2px;top:444.96px;width:1.100px;height:410px;background:#4fa56c"></div>
<div style="left:1341.6px;top:444.96px;width:1.100px;height:410px;background:#4fa56c"></div>
<div style="left:1372.5px;top:138.8px;width:10.500px;height:715px;background:#fff;border-left:1px solid #e6e6e6"></div>
<div style="left:1375px;top:141px;width:7.400px;height:23px;background:#dadce0;border-radius:4px"></div>
<div style="left:1372.5px;top:824.5px;width:10.500px;height:14.500px;border:1px solid #e4e4e4;background:#fafafa"></div>
<div style="left:1372.5px;top:839px;width:10.500px;height:14.500px;border:1px solid #e4e4e4;background:#fafafa"></div>
<svg style="left:1375.7px;top:829.5px" width="5" height="4" viewBox="0 0 5 4"><path d="M0 4h5L2.500 0z" fill="#b5b5b5"/></svg>
<svg style="left:1375.7px;top:844.5px" width="5" height="4" viewBox="0 0 5 4"><path d="M0 0h5L2.500 4z" fill="#b5b5b5"/></svg>
<div style="left:0;top:853.5px;width:1383px;height:11px;background:#fff;border-top:1px solid #e8e8e8"></div>
<div style="left:0;top:854px;width:41px;height:10.500px;background:#f8f9fa"></div>
<div style="left:44.4px;top:856.3px;width:715px;height:6.600px;background:#d9dbde;border-radius:4px"></div>
<div style="left:1344px;top:853.5px;width:14.500px;height:11px;border:1px solid #e4e4e4;background:#fafafa"></div>
<div style="left:1358.5px;top:853.5px;width:14.500px;height:11px;border:1px solid #e4e4e4;background:#fafafa"></div>
<svg style="left:1349px;top:857px" width="4" height="5" viewBox="0 0 4 5"><path d="M4 0v5L0 2.500z" fill="#b5b5b5"/></svg>
<svg style="left:1364px;top:857px" width="4" height="5" viewBox="0 0 4 5"><path d="M0 0v5L4 2.500z" fill="#b5b5b5"/></svg>
<div style="left:0;top:864.5px;width:1383px;height:36px;background:linear-gradient(#f5f6f7,#eceef0 60%,#e3e5e8);border-top:1px solid #e6e7e9"></div>
<div style="left:310.8px;top:864.5px;width:134px;height:35px;background:#fff;box-shadow:0 1px 3px rgba(0,0,0,.2)"></div>
<div style="left:106.5px;top:865px;width:1px;height:34px;background:#e4e5e7"></div>
<div style="left:221.5px;top:865px;width:1px;height:34px;background:#e4e5e7"></div>
<div class="tab" style="left:46px;top:865px;font-size:17px;color:#555">+</div>
<svg style="left:74px;top:877px" width="12" height="11" viewBox="0 0 12 11"><path d="M0 1h12M0 4h12M0 7h12M0 10h12" stroke="#555" stroke-width="1.600"/></svg>
<div class="tab" style="left:121px;top:865px">Instruction</div>
<svg style="left:198.3px;top:881.2px" width="8" height="4.24" viewBox="0 0 10 5" preserveAspectRatio="none"><path d="M0 0h10L5 5z" fill="#666"/></svg>
<div class="tab" style="left:236.5px;top:865px">Master</div>
<svg style="left:288.0px;top:881.2px" width="8" height="4.24" viewBox="0 0 10 5" preserveAspectRatio="none"><path d="M0 0h10L5 5z" fill="#666"/></svg>
<div class="tab" style="left:326px;top:865px;color:#188038">Client Tracker</div>
<svg style="left:422.0px;top:881.2px" width="8" height="4.24" viewBox="0 0 10 5" preserveAspectRatio="none"><path d="M0 0h10L5 5z" fill="#188038"/></svg>
<svg style="left:1297px;top:874px" width="16.700" height="19.400" viewBox="0 0 16.700 19.400"><path d="M1.800 0h13.100a1.800 1.800 0 0 1 1.800 1.800v12.900a1.800 1.800 0 0 1-1.800 1.800h-3.800L8.350 19.400 5.600 16.500H1.800A1.800 1.800 0 0 1 0 14.700V1.800A1.800 1.800 0 0 1 1.800 0z" fill="#666"/><path d="M8.350 2.800l1.500 3.700 3.700 1.500-3.700 1.500-1.500 3.700-1.500-3.700L3.150 8l3.700-1.500z" fill="#fff"/></svg>
<svg style="left:1354px;top:879.5px" width="7" height="10" viewBox="0 0 7 10"><path d="M6 1L1.500 5 6 9" fill="none" stroke="#444" stroke-width="1.500"/></svg>
</div>
</body></html>
